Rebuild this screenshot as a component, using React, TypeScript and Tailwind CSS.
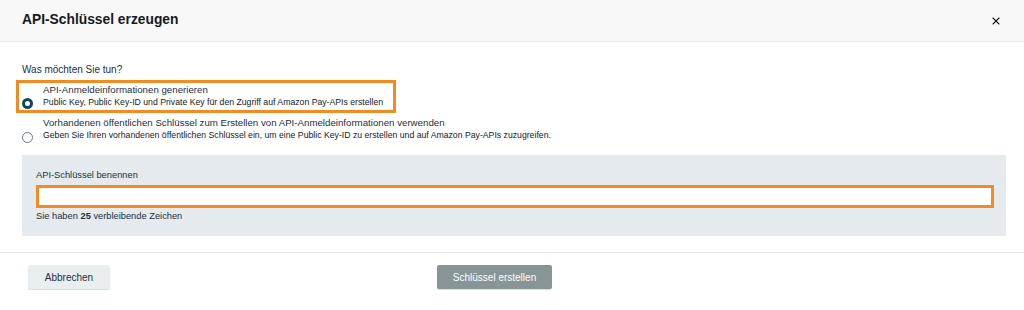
import React from "react";
import { X } from "lucide-react";

function Radio({ checked }: { checked?: boolean }) {
  return checked ? (
    <span className="mb-[-1px] block h-[11px] w-[11px] rounded-full border-[3px] border-[#0a4a64] bg-white" />
  ) : (
    <span className="mb-[-2px] block h-[11px] w-[11px] rounded-full border border-[#5f7d8c] bg-white" />
  );
}

export default function App() {
  return (
    <div className="relative h-[310px] w-[1024px] overflow-hidden bg-white text-[#16191f] font-['Liberation_Sans',Arial,sans-serif]">
      <div className="flex h-[42px] items-center justify-between border-b border-[#e7e9e9] bg-[#f8f8f8] px-[22px]">
        <h1 className="text-[13.8px] font-bold text-[#16191f]">API-Schlüssel erzeugen</h1>
        <X size={12} strokeWidth={2.2} className="text-[#16191f]" />
      </div>

      <div className="pl-[22px] pr-[18px] pt-[21px] pb-[16px]">
        <div className="h-[14px] text-[10px] leading-[14px] text-[#232f3e]">Was möchten Sie tun?</div>

        <div className="relative mt-[6px] flex flex-col gap-[8px]">
          <div className="pointer-events-none absolute left-[-6px] top-[-3px] h-[33px] w-[380px] border-[3px] border-[#f28b22]" />
          <div className="flex">
            <div className="flex w-[21px] flex-none items-end">
              <Radio checked />
            </div>
            <div>
              <div className="text-[9.7px] leading-[13px] text-[#232f3e]">API-Anmeldeinformationen generieren</div>
              <div className="text-[8.7px] leading-[12px] text-[#16191f]">
                Public Key, Public Key-ID und Private Key für den Zugriff auf Amazon Pay-APIs erstellen
              </div>
            </div>
          </div>
          <div className="flex">
            <div className="flex w-[21px] flex-none items-end">
              <Radio />
            </div>
            <div>
              <div className="text-[9.7px] leading-[13px] text-[#232f3e]">
                Vorhandenen öffentlichen Schlüssel zum Erstellen von API-Anmeldeinformationen verwenden
              </div>
              <div className="text-[8.7px] leading-[12px] text-[#16191f]">
                Geben Sie Ihren vorhandenen öffentlichen Schlüssel ein, um eine Public Key-ID zu erstellen und auf Amazon Pay-APIs zuzugreifen.
              </div>
            </div>
          </div>
        </div>

        <div className="mt-[14px] bg-[#e4eaed] pb-[14px] pl-[14px] pr-[12px] pt-[14px]">
          <div className="text-[9.3px] leading-[12px] text-[#232f3e]">API-Schlüssel benennen</div>
          <div className="mt-[4px] h-[23px] border-[3px] border-[#f28b22] bg-white" />
          <div className="mt-[2px] text-[9.3px] leading-[12px] text-[#232f3e]">
            Sie haben <span className="font-bold">25</span> verbleibende Zeichen
          </div>
        </div>
      </div>

      <div className="flex border-t border-[#e7e9e9] pl-[28px] pt-[12px]">
        <button className="h-[24px] w-[82px] rounded-[2px] bg-[#e9eef0] text-[10px] text-[#232f3e] shadow-[0_1px_1px_rgba(0,0,0,0.15)]">
          Abbrechen
        </button>
        <button className="ml-[327px] h-[24px] w-[115px] rounded-[2px] bg-[#879596] text-[10px] text-white shadow-[0_1px_1px_rgba(0,0,0,0.15)]">
          Schlüssel erstellen
        </button>
      </div>
    </div>
  );
}
